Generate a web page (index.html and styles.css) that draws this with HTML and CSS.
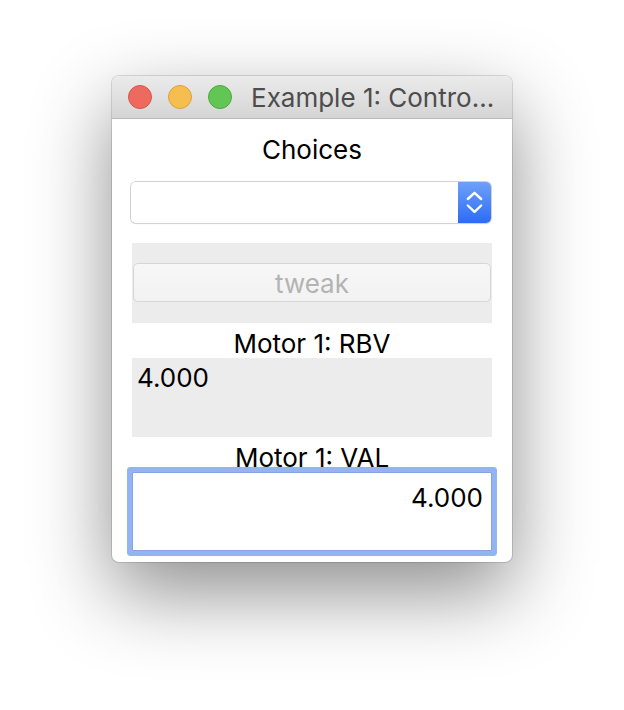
FILE: index.html
```html
<!DOCTYPE html>
<html>
<head>
<meta charset="utf-8">
<link rel="stylesheet" href="styles.css">
</head>
<body>
<div class="window">
  <div class="titlebar">
    <div class="lights">
      <span class="light red"></span>
      <span class="light yellow"></span>
      <span class="light green"></span>
    </div>
    <div class="title">Example 1: Contro...</div>
  </div>
  <div class="content">
    <div class="label first">Choices</div>
    <div class="combo">
      <div class="combo-field"></div>
      <div class="stepper">
        <svg width="17" height="23" viewBox="0 0 17 23">
          <polyline points="1.8,8 8.5,1.8 15.2,8" fill="none" stroke="#fff" stroke-width="2.4" stroke-linecap="round" stroke-linejoin="round"/>
          <polyline points="1.8,14.5 8.5,20.8 15.2,14.5" fill="none" stroke="#fff" stroke-width="2.4" stroke-linecap="round" stroke-linejoin="round"/>
        </svg>
      </div>
    </div>
    <div class="panel tweak-panel">
      <div class="button">tweak</div>
    </div>
    <div class="label">Motor 1: RBV</div>
    <div class="panel readback">4.000</div>
    <div class="label">Motor 1: VAL</div>
    <div class="entry">4.000</div>
  </div>
</div>
</body>
</html>
```
FILE: styles.css
```css
html, body {
  margin: 0;
  padding: 0;
  background: #ffffff;
}
html {
  height: 100%;
}
body {
  min-height: 710px;
  box-sizing: border-box;
  padding: 76px 0 0 112px;
  font-family: Inter, "Liberation Sans", sans-serif;
  color: #000;
}
.window {
  width: 400px;
  height: 486px;
  background: #ffffff;
  border-radius: 7px;
  box-shadow: 0 0 0 1px rgba(0, 0, 0, 0.13), 0 30px 80px rgba(0, 0, 0, 0.45);
  display: flex;
  flex-direction: column;
  overflow: hidden;
}
.titlebar {
  height: 42px;
  border-bottom: 1px solid #b9b9b9;
  background: linear-gradient(#ebebeb, #d5d5d5);
  display: flex;
  align-items: center;
  padding-left: 16px;
}
.lights {
  display: flex;
  gap: 16px;
}
.light {
  width: 24px;
  height: 24px;
  border-radius: 50%;
  box-sizing: border-box;
}
.red { background: #ee6a5f; border: 1px solid #d5574c; }
.yellow { background: #f6be4f; border: 1px solid #d9a23f; }
.green { background: #62c655; border: 1px solid #4ea73c; }
.title {
  margin-left: 19px;
  font-size: 26px;
  color: #4d4d4d;
  white-space: nowrap;
  padding-top: 1px;
}
.content {
  flex: 1;
  display: flex;
  flex-direction: column;
  padding: 0 20px 11px 20px;
}
.label {
  height: 35px;
  box-sizing: border-box;
  padding-top: 6px;
  line-height: 30px;
  font-size: 26px;
  text-align: center;
  white-space: nowrap;
}
.label.first {
  height: 63px;
  padding-top: 16px;
}
.combo {
  height: 41px;
  margin: 0 1px 20px -1px;
  display: flex;
  border-radius: 5px;
  box-shadow: 0 0 0 1px #d2d2d2, 0 1px 1px rgba(0,0,0,0.16);
  overflow: hidden;
}
.combo-field {
  flex: 1;
  background: #fff;
}
.stepper {
  width: 33px;
  background: linear-gradient(#6fa0f8, #2b6cf6);
  display: flex;
  align-items: center;
  justify-content: center;
}
.panel {
  background: #ececec;
}
.tweak-panel {
  height: 80px;
  padding: 20px 1px 0 1px;
  box-sizing: border-box;
}
.button {
  height: 39px;
  box-sizing: border-box;
  border: 1px solid #d6d6d6;
  border-radius: 5px;
  background: linear-gradient(#f7f7f7, #f2f2f2);
  color: #b3b3b3;
  font-size: 26px;
  line-height: 30px;
  padding-top: 5px;
  text-align: center;
}
.readback {
  height: 79px;
  box-sizing: border-box;
  padding: 5px 5px 0;
  font-size: 26px;
  line-height: 30px;
}
.entry {
  height: 79px;
  box-sizing: border-box;
  border: 1px solid #86a3de;
  box-shadow: 0 0 0 5px #93b4f2;
  border-radius: 1px;
  background: #fff;
  padding: 10px 8px 0;
  font-size: 26px;
  line-height: 30px;
  text-align: right;
}
```
